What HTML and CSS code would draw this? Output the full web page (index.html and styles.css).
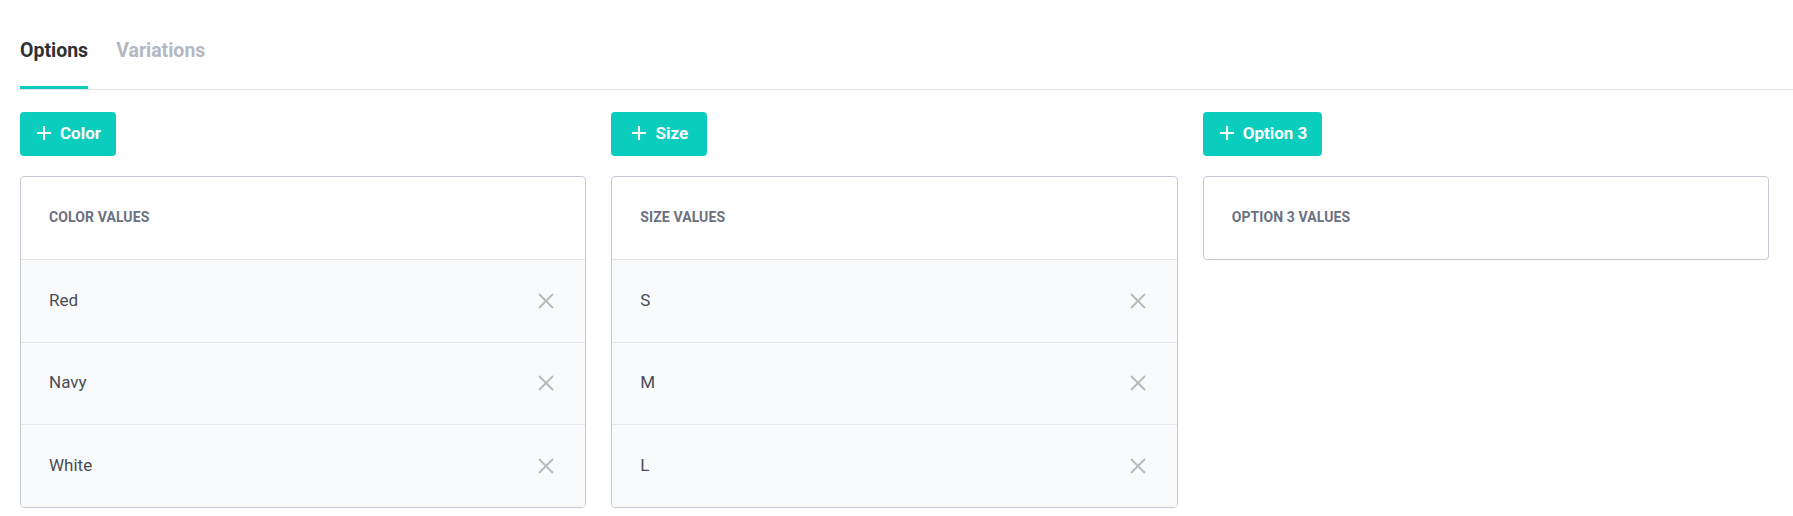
FILE: index.html
```html
<!DOCTYPE html>
<html>
<head>
<meta charset="utf-8">
<link rel="stylesheet" href="styles.css">
</head>
<body>
<div class="page">
  <nav class="tabs">
    <div class="tab active">Options</div>
    <div class="tab">Variations</div>
  </nav>
  <div class="columns">
    <section class="col">
      <button class="add-btn"><svg class="plus" viewBox="0 0 12 12"><path d="M6 0v12M0 6h12"/></svg>Color</button>
      <div class="card">
        <div class="card-head">COLOR VALUES</div>
        <div class="row"><span>Red</span><svg class="x" viewBox="0 0 16 16"><path d="M1 1l14 14M15 1L1 15"/></svg></div>
        <div class="row"><span>Navy</span><svg class="x" viewBox="0 0 16 16"><path d="M1 1l14 14M15 1L1 15"/></svg></div>
        <div class="row"><span>White</span><svg class="x" viewBox="0 0 16 16"><path d="M1 1l14 14M15 1L1 15"/></svg></div>
      </div>
    </section>
    <section class="col">
      <button class="add-btn"><svg class="plus" viewBox="0 0 12 12"><path d="M6 0v12M0 6h12"/></svg>Size</button>
      <div class="card">
        <div class="card-head">SIZE VALUES</div>
        <div class="row"><span>S</span><svg class="x" viewBox="0 0 16 16"><path d="M1 1l14 14M15 1L1 15"/></svg></div>
        <div class="row"><span>M</span><svg class="x" viewBox="0 0 16 16"><path d="M1 1l14 14M15 1L1 15"/></svg></div>
        <div class="row"><span>L</span><svg class="x" viewBox="0 0 16 16"><path d="M1 1l14 14M15 1L1 15"/></svg></div>
      </div>
    </section>
    <section class="col">
      <button class="add-btn"><svg class="plus" viewBox="0 0 12 12"><path d="M6 0v12M0 6h12"/></svg>Option 3</button>
      <div class="card">
        <div class="card-head">OPTION 3 VALUES</div>
      </div>
    </section>
  </div>
</div>
</body>
</html>
```

FILE: styles.css
```css
* { box-sizing: border-box; }
html, body { margin: 0; background: #fff; }
body { font-family: Roboto, "Noto Sans", sans-serif; color: #333; }
.page { padding-left: 20px; padding-top: 39px; }
.tabs {
  display: flex;
  gap: 28px;
  border-bottom: 1px solid #e2e2e2;
}
.tab {
  font-size: 19.5px;
  font-weight: 700;
  line-height: 24px;
  padding-bottom: 23px;
  border-bottom: 3px solid transparent;
  color: #b4b8c1;
}
.tab.active { color: #2f3033; border-bottom-color: #0bcdbe; }
.columns {
  display: grid;
  grid-template-columns: repeat(3, 1fr);
  gap: 25px;
  padding: 22px 24px 0 0;
  align-items: start;
}
.col { display: flex; flex-direction: column; align-items: flex-start; gap: 20px; }
.add-btn {
  display: flex;
  align-items: center;
  justify-content: center;
  gap: 9px;
  min-width: 96px;
  height: 44px;
  padding: 0 15px 2px 17px;
  border: none;
  border-radius: 4px;
  background: #0bcdbe;
  color: #fff;
  font-family: Roboto, sans-serif;
  font-size: 17px;
  font-weight: 700;
}
.plus { width: 14px; height: 14px; stroke: #fff; stroke-width: 1.8; fill: none; }
.card {
  width: 100%;
  border: 1px solid #c7c9d9;
  border-radius: 4px;
  overflow: hidden;
  background: #fff;
}
.card-head {
  height: 82px;
  display: flex;
  align-items: center;
  padding: 0 0 2px 28px;
  font-size: 14px;
  font-weight: 700;
  color: #6b7180;
  letter-spacing: 0.1px;
}
.row {
  height: 82.5px;
  display: flex;
  align-items: center;
  justify-content: space-between;
  padding: 0 31px 0 28px;
  background: #f9fafb;
  border-top: 1px solid #e4e6eb;
  font-size: 17px;
  color: #4a4c55;
}
.row span { padding-bottom: 2px; }
.x { width: 16px; height: 16px; stroke: #b8b8bb; stroke-width: 1.8; fill: none; }
```
